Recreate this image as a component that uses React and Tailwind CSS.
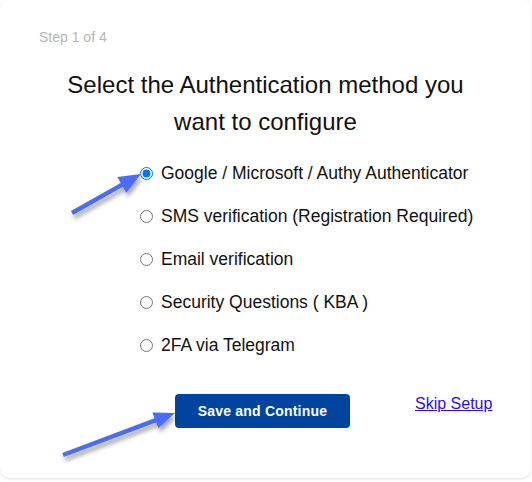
import React from "react";

const options = [
  "Google / Microsoft / Authy Authenticator",
  "SMS verification (Registration Required)",
  "Email verification",
  "Security Questions ( KBA )",
  "2FA via Telegram",
];

function Arrow({ x1, y1, x2, y2, len = 21, half = 8.5 }) {
  const dx = x2 - x1;
  const dy = y2 - y1;
  const L = Math.hypot(dx, dy);
  const ux = dx / L;
  const uy = dy / L;
  const px = -uy;
  const py = ux;
  const bx = x2 - ux * len;
  const by = y2 - uy * len;
  const pts = `${x2},${y2} ${bx + px * half},${by + py * half} ${bx - px * half},${by - py * half}`;
  return (
    <g>
      <line x1={x1} y1={y1} x2={bx + ux * 2} y2={by + uy * 2} stroke="#4b6cf8" strokeWidth="4.5" strokeLinecap="butt" />
      <polygon points={pts} fill="#4b6cf8" />
    </g>
  );
}

export default function App() {
  return (
    <div className="w-[532px] h-[482px] bg-white" style={{ fontFamily: '"Liberation Sans", Arial, sans-serif' }}>
      <div className="relative w-[531px] h-[478px] bg-white rounded-[10px] shadow-[0_1px_3px_rgba(0,0,0,0.12)] flex flex-col">
        <div className="pt-[29px] pl-[39px] text-[14px] leading-[16px] text-[#b5b5b5]">Step 1 of 4</div>
        <h1 className="mt-[21px] mx-auto max-w-[420px] text-center text-[24px] leading-[37px] text-[#111]">
          Select the Authentication method you want to configure
        </h1>
        <div className="mt-[12px] pl-[140px] flex flex-col">
          {options.map((o, i) => (
            <label key={o} className="h-[43px] flex items-center gap-[8px] text-[17.5px] text-[#111]">
              <input type="radio" name="m" defaultChecked={i === 0} className="m-0 w-[13px] h-[13px]" />
              <span>{o}</span>
            </label>
          ))}
        </div>
        <div className="mt-[27px] flex items-start">
          <button className="ml-[175px] w-[175px] h-[34px] rounded-[4px] bg-[#00449e] text-white text-[14px] font-bold tracking-[0.2px]">
            Save and Continue
          </button>
          <a href="#" className="ml-[65px] mt-[1px] text-[16px] leading-[18px] text-[#2a0df0] underline">
            Skip Setup
          </a>
        </div>
        <svg className="absolute left-0 top-0 pointer-events-none" width="531" height="478" viewBox="0 0 531 478">
          <defs>
            <filter id="ds" x="-20%" y="-20%" width="140%" height="160%">
              <feDropShadow dx="2" dy="4" stdDeviation="2" floodColor="#000" floodOpacity="0.35" />
            </filter>
          </defs>
          <g filter="url(#ds)">
            <Arrow x1={72} y1={213} x2={141} y2={174} len={22} half={9} />
            <Arrow x1={63} y1={455} x2={175} y2={413} len={21} half={8.5} />
          </g>
        </svg>
      </div>
    </div>
  );
}
